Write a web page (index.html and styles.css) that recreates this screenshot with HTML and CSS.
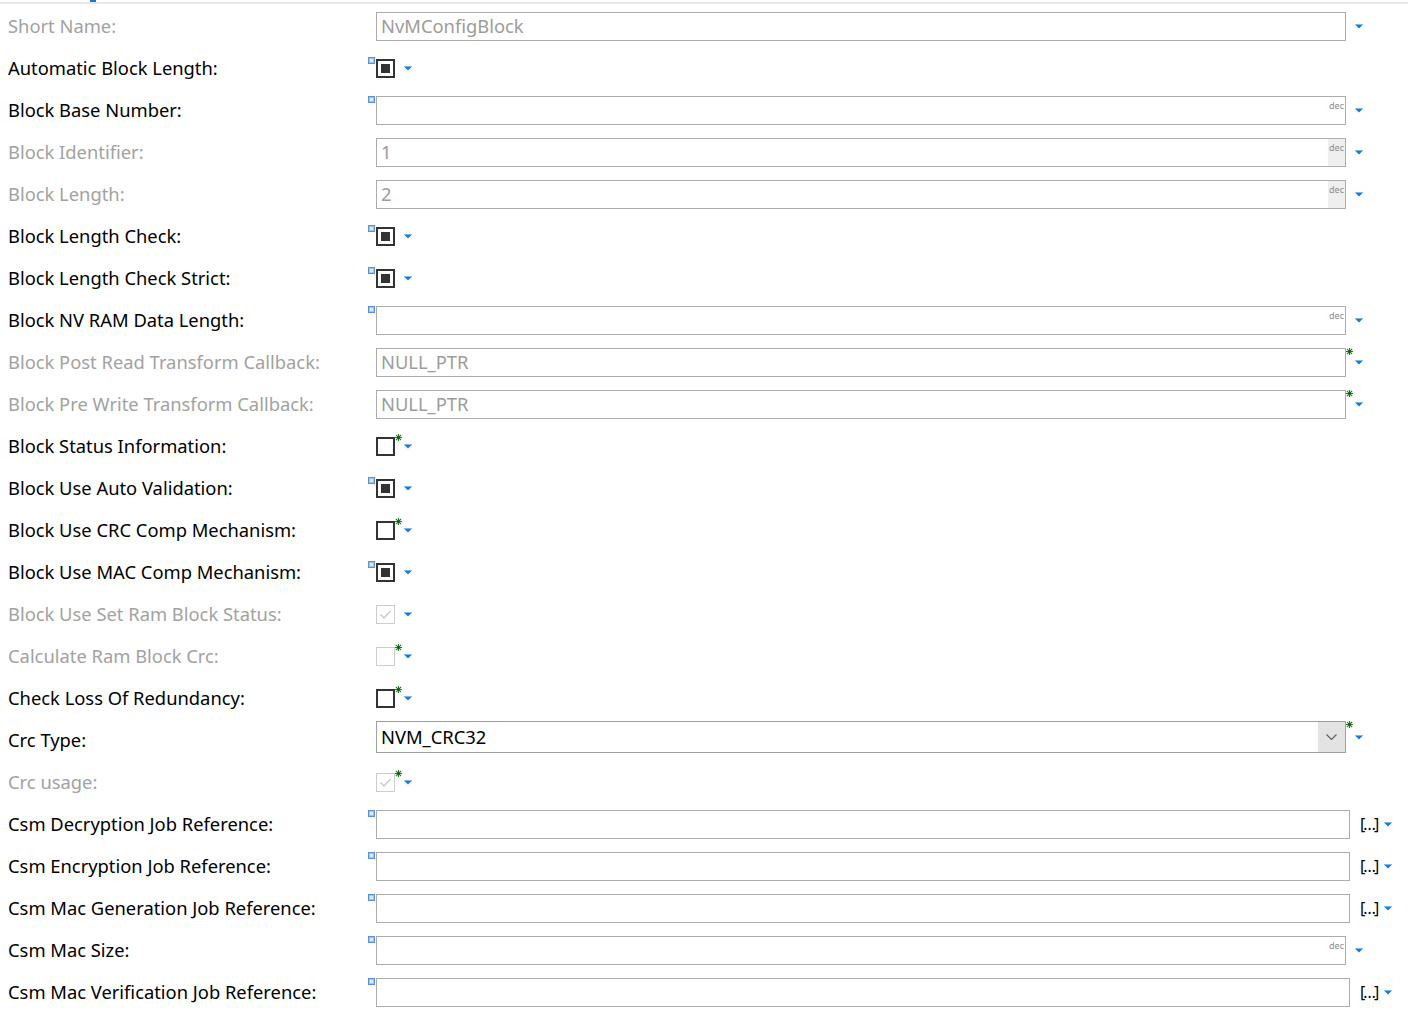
FILE: index.html
```html
<!DOCTYPE html>
<html lang="en">
<head>
<meta charset="utf-8">
<title>NvMBlockDescriptor</title>
<link rel="stylesheet" href="styles.css">
</head>
<body>
<svg class="defs" width="0" height="0" aria-hidden="true">
  <defs>
    <symbol id="i-dd" viewBox="0 0 8 5">
      <path d="M0 0.5h8L4 4.5z" fill="#1b7ad6"/>
      <path d="M0 0.5h8" stroke="#7db8ef" stroke-width="1"/>
    </symbol>
    <symbol id="i-mark" viewBox="0 0 7 7">
      <rect x="0" y="0" width="7" height="7" fill="#9cc4ee"/>
      <rect x="0.5" y="0.5" width="6" height="6" fill="none" stroke="#1f5bbd" stroke-width="1" stroke-dasharray="1 1"/>
      <rect x="2" y="2" width="3" height="3" fill="#dcebfb"/>
    </symbol>
    <symbol id="i-star" viewBox="0 0 7 7">
      <g stroke="#1d7d1d" stroke-width="1.1" stroke-linecap="square">
        <path d="M3.5 0.5v6M0.5 3.5h6M1.3 1.3l4.4 4.4M5.7 1.3l-4.4 4.4"/>
      </g>
      <circle cx="3.5" cy="3.5" r="1.3" fill="#0f5f0f"/>
    </symbol>
    <symbol id="i-tick" viewBox="0 0 17 17">
      <path d="M3.5 8.5l3.5 3.5l6.5-7" fill="none" stroke="#c8c8c8" stroke-width="1.3"/>
    </symbol>
    <symbol id="i-chev" viewBox="0 0 11 6">
      <path d="M0.5 0.5l5 5l5-5" fill="none" stroke="#5a5a5a" stroke-width="1.1"/>
    </symbol>
  </defs>
</svg>

<div class="tabline"><span class="tab-mark"></span></div>

<div class="form">

  <div class="row off">
    <span class="lbl">Short Name:</span>
    <div class="ctl">
      <div class="wrap"><div class="field"><span class="val">NvMConfigBlock</span></div></div>
      <span class="side"></span>
      <svg class="dd"><use href="#i-dd"/></svg>
    </div>
  </div>

  <div class="row">
    <span class="lbl">Automatic Block Length:</span>
    <div class="ctl">
      <div class="wrap chkwrap"><svg class="mark"><use href="#i-mark"/></svg><span class="chk on"></span></div>
      <span class="side"></span>
      <svg class="dd"><use href="#i-dd"/></svg>
    </div>
  </div>

  <div class="row">
    <span class="lbl">Block Base Number:</span>
    <div class="ctl">
      <div class="wrap"><svg class="mark"><use href="#i-mark"/></svg><div class="field"><span class="val"></span><span class="dec">dec</span></div></div>
      <span class="side"></span>
      <svg class="dd"><use href="#i-dd"/></svg>
    </div>
  </div>

  <div class="row off">
    <span class="lbl">Block Identifier:</span>
    <div class="ctl">
      <div class="wrap"><div class="field"><span class="val">1</span><span class="dec">dec</span></div></div>
      <span class="side"></span>
      <svg class="dd"><use href="#i-dd"/></svg>
    </div>
  </div>

  <div class="row off">
    <span class="lbl">Block Length:</span>
    <div class="ctl">
      <div class="wrap"><div class="field"><span class="val">2</span><span class="dec">dec</span></div></div>
      <span class="side"></span>
      <svg class="dd"><use href="#i-dd"/></svg>
    </div>
  </div>

  <div class="row">
    <span class="lbl">Block Length Check:</span>
    <div class="ctl">
      <div class="wrap chkwrap"><svg class="mark"><use href="#i-mark"/></svg><span class="chk on"></span></div>
      <span class="side"></span>
      <svg class="dd"><use href="#i-dd"/></svg>
    </div>
  </div>

  <div class="row">
    <span class="lbl">Block Length Check Strict:</span>
    <div class="ctl">
      <div class="wrap chkwrap"><svg class="mark"><use href="#i-mark"/></svg><span class="chk on"></span></div>
      <span class="side"></span>
      <svg class="dd"><use href="#i-dd"/></svg>
    </div>
  </div>

  <div class="row">
    <span class="lbl">Block NV RAM Data Length:</span>
    <div class="ctl">
      <div class="wrap"><svg class="mark"><use href="#i-mark"/></svg><div class="field"><span class="val"></span><span class="dec">dec</span></div></div>
      <span class="side"></span>
      <svg class="dd"><use href="#i-dd"/></svg>
    </div>
  </div>

  <div class="row off">
    <span class="lbl">Block Post Read Transform Callback:</span>
    <div class="ctl">
      <div class="wrap"><div class="field"><span class="val">NULL_PTR</span></div></div>
      <span class="side"><svg class="star"><use href="#i-star"/></svg></span>
      <svg class="dd"><use href="#i-dd"/></svg>
    </div>
  </div>

  <div class="row off">
    <span class="lbl">Block Pre Write Transform Callback:</span>
    <div class="ctl">
      <div class="wrap"><div class="field"><span class="val">NULL_PTR</span></div></div>
      <span class="side"><svg class="star"><use href="#i-star"/></svg></span>
      <svg class="dd"><use href="#i-dd"/></svg>
    </div>
  </div>

  <div class="row">
    <span class="lbl">Block Status Information:</span>
    <div class="ctl">
      <div class="wrap chkwrap"><span class="chk"></span></div>
      <span class="side"><svg class="star"><use href="#i-star"/></svg></span>
      <svg class="dd"><use href="#i-dd"/></svg>
    </div>
  </div>

  <div class="row">
    <span class="lbl">Block Use Auto Validation:</span>
    <div class="ctl">
      <div class="wrap chkwrap"><svg class="mark"><use href="#i-mark"/></svg><span class="chk on"></span></div>
      <span class="side"></span>
      <svg class="dd"><use href="#i-dd"/></svg>
    </div>
  </div>

  <div class="row">
    <span class="lbl">Block Use CRC Comp Mechanism:</span>
    <div class="ctl">
      <div class="wrap chkwrap"><span class="chk"></span></div>
      <span class="side"><svg class="star"><use href="#i-star"/></svg></span>
      <svg class="dd"><use href="#i-dd"/></svg>
    </div>
  </div>

  <div class="row">
    <span class="lbl">Block Use MAC Comp Mechanism:</span>
    <div class="ctl">
      <div class="wrap chkwrap"><svg class="mark"><use href="#i-mark"/></svg><span class="chk on"></span></div>
      <span class="side"></span>
      <svg class="dd"><use href="#i-dd"/></svg>
    </div>
  </div>

  <div class="row off">
    <span class="lbl">Block Use Set Ram Block Status:</span>
    <div class="ctl">
      <div class="wrap chkwrap"><span class="chk"><svg class="tick"><use href="#i-tick"/></svg></span></div>
      <span class="side"></span>
      <svg class="dd"><use href="#i-dd"/></svg>
    </div>
  </div>

  <div class="row off">
    <span class="lbl">Calculate Ram Block Crc:</span>
    <div class="ctl">
      <div class="wrap chkwrap"><span class="chk"></span></div>
      <span class="side"><svg class="star"><use href="#i-star"/></svg></span>
      <svg class="dd"><use href="#i-dd"/></svg>
    </div>
  </div>

  <div class="row">
    <span class="lbl">Check Loss Of Redundancy:</span>
    <div class="ctl">
      <div class="wrap chkwrap"><span class="chk"></span></div>
      <span class="side"><svg class="star"><use href="#i-star"/></svg></span>
      <svg class="dd"><use href="#i-dd"/></svg>
    </div>
  </div>

  <div class="row">
    <span class="lbl">Crc Type:</span>
    <div class="ctl lifted">
      <div class="wrap"><div class="select"><span class="val">NVM_CRC32</span><span class="btn"><svg class="chev"><use href="#i-chev"/></svg></span></div></div>
      <span class="side"><svg class="star"><use href="#i-star"/></svg></span>
      <svg class="dd"><use href="#i-dd"/></svg>
    </div>
  </div>

  <div class="row off">
    <span class="lbl">Crc usage:</span>
    <div class="ctl">
      <div class="wrap chkwrap"><span class="chk"><svg class="tick"><use href="#i-tick"/></svg></span></div>
      <span class="side"><svg class="star"><use href="#i-star"/></svg></span>
      <svg class="dd"><use href="#i-dd"/></svg>
    </div>
  </div>

  <div class="row">
    <span class="lbl">Csm Decryption Job Reference:</span>
    <div class="ctl">
      <div class="wrap"><svg class="mark"><use href="#i-mark"/></svg><div class="field ref"><span class="val"></span></div></div>
      <span class="browse">[…]</span>
      <svg class="dd"><use href="#i-dd"/></svg>
    </div>
  </div>

  <div class="row">
    <span class="lbl">Csm Encryption Job Reference:</span>
    <div class="ctl">
      <div class="wrap"><svg class="mark"><use href="#i-mark"/></svg><div class="field ref"><span class="val"></span></div></div>
      <span class="browse">[…]</span>
      <svg class="dd"><use href="#i-dd"/></svg>
    </div>
  </div>

  <div class="row">
    <span class="lbl">Csm Mac Generation Job Reference:</span>
    <div class="ctl">
      <div class="wrap"><svg class="mark"><use href="#i-mark"/></svg><div class="field ref"><span class="val"></span></div></div>
      <span class="browse">[…]</span>
      <svg class="dd"><use href="#i-dd"/></svg>
    </div>
  </div>

  <div class="row">
    <span class="lbl">Csm Mac Size:</span>
    <div class="ctl">
      <div class="wrap"><svg class="mark"><use href="#i-mark"/></svg><div class="field"><span class="val"></span><span class="dec">dec</span></div></div>
      <span class="side"></span>
      <svg class="dd"><use href="#i-dd"/></svg>
    </div>
  </div>

  <div class="row">
    <span class="lbl">Csm Mac Verification Job Reference:</span>
    <div class="ctl">
      <div class="wrap"><svg class="mark"><use href="#i-mark"/></svg><div class="field ref"><span class="val"></span></div></div>
      <span class="browse">[…]</span>
      <svg class="dd"><use href="#i-dd"/></svg>
    </div>
  </div>

</div>
</body>
</html>
```

FILE: styles.css
```css
html, body {
  margin: 0;
  background: #ffffff;
}

body {
  font-family: "Noto Sans", "Open Sans", sans-serif;
  font-size: 18.35px;
  color: #000000;
  overflow: hidden;
}

.defs {
  position: absolute;
  width: 0;
  height: 0;
}

/* editor tab strip edge */
.tabline {
  height: 2px;
  border-bottom: 2px solid #e8e8e8;
}

.tab-mark {
  display: block;
  margin-left: 90px;
  width: 6px;
  height: 2px;
  background: #1c74d4;
}

.form {
  padding: 1px 0 0 8px;
}

.row {
  display: grid;
  grid-template-columns: 360px auto;
  align-items: center;
  height: 42px;
}

.lbl {
  white-space: nowrap;
  line-height: 1;
}

.row.off .lbl {
  color: #a2a2a2;
}

/* control column */
.ctl {
  display: flex;
  align-items: center;
  padding-left: 8px;
}

.ctl.lifted {
  margin-bottom: 6px;
}

.wrap {
  position: relative;
  display: flex;
}

.mark {
  position: absolute;
  left: -8px;
  top: 0;
  width: 7px;
  height: 7px;
}

.chkwrap .mark {
  top: -2px;
}

.side {
  position: relative;
  align-self: stretch;
  width: 9px;
  flex: none;
}

.star {
  position: absolute;
  left: 0;
  top: 0;
  width: 7px;
  height: 7px;
}

.chkwrap + .side .star {
  top: -3px;
}

.dd {
  width: 8px;
  height: 5px;
  flex: none;
}

/* text / number fields */
.field {
  box-sizing: border-box;
  width: 970px;
  height: 29px;
  border: 1px solid #acacac;
  display: flex;
  align-items: center;
  background: #ffffff;
}

.field.ref {
  width: 974px;
}

.val {
  flex: 1;
  padding-left: 4px;
  line-height: 1;
  white-space: nowrap;
}

.row.off .val {
  color: #9c9c9c;
}

.dec {
  align-self: stretch;
  box-sizing: border-box;
  width: 17px;
  padding-top: 4px;
  font-size: 9px;
  line-height: 10px;
  color: #8c8c8c;
  text-align: center;
}

.row.off .dec {
  background: #efefef;
}

/* checkboxes */
.chk {
  box-sizing: border-box;
  width: 19px;
  height: 19px;
  border: 2px solid #333333;
  display: flex;
  align-items: center;
  justify-content: center;
  background: #ffffff;
}

.chk.on::after {
  content: "";
  width: 9px;
  height: 9px;
  background: #333333;
}

.row.off .chk {
  border: 1px solid #cdcdcd;
}

.tick {
  width: 17px;
  height: 17px;
}

/* combo box */
.select {
  box-sizing: border-box;
  width: 970px;
  height: 32px;
  border: 1px solid #a0a0a0;
  display: flex;
  align-items: center;
}

.select .btn {
  align-self: stretch;
  width: 27px;
  background: #e3e3e3;
  display: flex;
  align-items: center;
  justify-content: center;
}

.chev {
  width: 11px;
  height: 6px;
}

/* reference browse button */
.browse {
  margin: 0 5px 0 10px;
  font-size: 16px;
  letter-spacing: -2px;
  line-height: 1;
  padding-right: 2px;
}
```
